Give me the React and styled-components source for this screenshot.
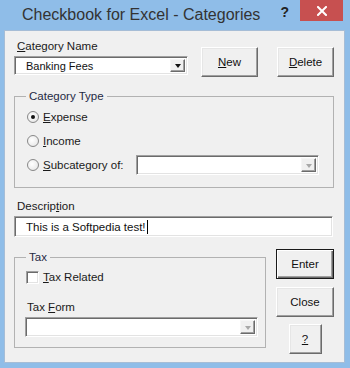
import React from 'react';
import styled, { createGlobalStyle, css } from 'styled-components';

const Global = createGlobalStyle`
  html, body { margin: 0; padding: 0; }
  body {
    width: 350px; height: 368px; overflow: hidden;
    font-family: "Liberation Sans", Arial, sans-serif;
    font-size: 11.5px; color: #1a1a1a;
  }
  * { box-sizing: border-box; }
`;

const Window = styled.div`
  width: 350px; height: 368px;
  background: #8fbde8;
  display: flex; flex-direction: column;
  padding: 0 5px 5px 4px;
`;

const TitleBar = styled.div`
  height: 30px; flex: none;
  display: flex; align-items: flex-start;
`;

const Title = styled.div`
  margin: 5px 0 0 18px;
  font-size: 16px; line-height: 20px;
  color: #333;
`;

const HelpGlyph = styled.div`
  margin: 4px 0 0 auto;
  font-size: 14px; font-weight: bold; line-height: 16px;
  color: #222;
`;

const CloseBtn = styled.div`
  width: 43px; height: 21px; margin-left: 11px; margin-right: 2px;
  background: #c75050;
  display: flex; align-items: center; justify-content: center;
`;

const Client = styled.div`
  flex: 1;
  background: #f0f0f0;
  border: 1px solid #a6bdd6;
  padding: 7px 10px 0 9px;
  display: flex; flex-direction: column;
`;

const TopRow = styled.div`
  display: flex; align-items: flex-start;
`;

const NameCol = styled.div`
  width: 174px;
  display: flex; flex-direction: column;
`;

const Label = styled.div`
  line-height: ${p => p.$lh || 16}px;
  margin-top: ${p => p.$mt || 0}px;
  margin-bottom: ${p => p.$mb || 0}px;
  padding-left: ${p => p.$indent || 0}px;
  white-space: nowrap;
`;

const U = styled.span`
  text-decoration: underline;
  text-underline-offset: 1px;
`;

const Button = styled.div`
  width: ${p => p.$w || 57}px; height: 30px;
  margin-left: ${p => p.$ml || 0}px;
  margin-top: ${p => p.$mt || 0}px;
  background: #f0f0f0;
  display: flex; align-items: center; justify-content: center;
  font-size: 11.5px; color: #111;
  ${p => p.$default ? css`
    border: 1px solid #1a1a1a;
    box-shadow: inset 1px 1px #fff, inset -1px -1px #6b6b6b, inset -2px -2px #a0a0a0;
  ` : css`
    border: 1px solid;
    border-color: #fff #6b6b6b #6b6b6b #fff;
    box-shadow: inset -1px -1px #a0a0a0, inset 1px 1px #e6e6e6;
  `}
`;

const sunken = css`
  background: #fff;
  border: 1px solid;
  border-color: #a0a0a0 #fff #fff #a0a0a0;
  box-shadow: inset 1px 1px #6b6b6b, inset -1px -1px #e3e3e3;
`;

const ComboBox = styled.div`
  ${sunken}
  width: ${p => p.$w}px; height: ${p => p.$h || 20}px;
  margin-left: ${p => p.$ml || 0}px;
  margin-top: ${p => p.$mt || 0}px;
  ${p => p.$push && css`margin-left: auto;`}
  display: flex; align-items: stretch;
  padding: 2px;
`;

const ComboText = styled.div`
  flex: 1;
  padding-left: 9px;
  display: flex; align-items: center;
  font-size: 11px;
  color: #111;
`;

const DropBtn = styled.div`
  width: 15px;
  background: #f0f0f0;
  border: 1px solid;
  border-color: #f6f6f6 #6b6b6b #6b6b6b #f6f6f6;
  box-shadow: inset -1px -1px #a0a0a0;
  display: flex; align-items: center; justify-content: center;
`;

const Arrow = styled.div`
  width: 0; height: 0;
  border-left: 3.5px solid transparent;
  border-right: 3.5px solid transparent;
  border-top: 4px solid ${p => p.$dim ? '#a8a8a8' : '#111'};
  margin-top: 1px;
`;

const Group = styled.fieldset`
  margin: ${p => p.$mt || 0}px 0 0 0;
  padding: 0;
  width: ${p => p.$w}px;
  border: 1px solid #b2b2b2;
  min-width: 0;
`;

const Legend = styled.legend`
  margin-left: 11px;
  padding: 0 3px;
  line-height: 14px;
  font-size: 11.5px;
  color: #1f2a44;
`;

const GroupBody = styled.div`
  padding: ${p => p.$pad};
  display: flex; flex-direction: column;
`;

const OptionRow = styled.div`
  height: ${p => p.$h || 24}px;
  display: flex; align-items: center;
`;

const Radio = styled.div`
  width: 12px; height: 12px; border-radius: 50%;
  border: 1px solid #888;
  background: radial-gradient(circle at 40% 40%, #fff 0%, #ececec 65%, #d2d2d2 100%);
  display: flex; align-items: center; justify-content: center;
  flex: none;
  &::after {
    content: "";
    width: 4px; height: 4px; border-radius: 50%;
    background: ${p => p.$checked ? '#111' : 'transparent'};
  }
`;

const Check = styled.div`
  ${sunken}
  width: 13px; height: 13px; flex: none;
`;

const OptLabel = styled.div`
  margin-left: 4px;
  white-space: nowrap;
`;

const TextInput = styled.div`
  ${sunken}
  width: 319px; height: 21px;
  margin-top: 3px;
  padding-left: 11px;
  display: flex; align-items: center;
  color: #111;
`;

const Caret = styled.span`
  display: inline-block;
  width: 1px; height: 14px;
  background: #000;
  margin-left: 1px;
`;

const BottomRow = styled.div`
  margin-top: 12px;
  display: flex; align-items: flex-start;
`;

const ButtonCol = styled.div`
  margin-left: 10px; width: 58px;
  display: flex; flex-direction: column; align-items: center;
`;

export default function App() {
  return (
    <>
      <Global />
      <Window>
        <TitleBar>
          <Title>Checkbook for Excel - Categories</Title>
          <HelpGlyph>?</HelpGlyph>
          <CloseBtn>
            <svg width="10" height="10" viewBox="0 0 10 10">
              <path d="M1 1 L9 9 M9 1 L1 9" stroke="#fff" strokeWidth="2" strokeLinecap="square" />
            </svg>
          </CloseBtn>
        </TitleBar>
        <Client>
          <TopRow>
            <NameCol>
              <Label $lh={16} $mb={2} $indent={3}><U>C</U>ategory Name</Label>
              <ComboBox $w={174} $h={19}>
                <ComboText>Banking Fees</ComboText>
                <DropBtn><Arrow /></DropBtn>
              </ComboBox>
            </NameCol>
            <Button $ml={13} $mt={9}><U>N</U>ew</Button>
            <Button $ml={19} $mt={9}><U>D</U>elete</Button>
          </TopRow>

          <Group $mt={12} $w={320}>
            <Legend>Category Type</Legend>
            <GroupBody $pad="2px 14px 10px 12px">
              <OptionRow>
                <Radio $checked />
                <OptLabel><U>E</U>xpense</OptLabel>
              </OptionRow>
              <OptionRow>
                <Radio />
                <OptLabel><U>I</U>ncome</OptLabel>
              </OptionRow>
              <OptionRow>
                <Radio />
                <OptLabel><U>S</U>ubcategory of:</OptLabel>
                <ComboBox $w={183} $h={20} $push>
                  <ComboText />
                  <DropBtn><Arrow $dim /></DropBtn>
                </ComboBox>
              </OptionRow>
            </GroupBody>
          </Group>

          <Label $lh={14} $mt={11} $indent={3}>Descrip<U>t</U>ion</Label>
          <TextInput>This is a Softpedia test!<Caret /></TextInput>

          <BottomRow>
            <Group $mt={1} $w={252}>
              <Legend>Tax</Legend>
              <GroupBody $pad="0 0 10px 11px">
                <OptionRow $h={26}>
                  <Check />
                  <OptLabel><U>T</U>ax Related</OptLabel>
                </OptionRow>
                <Label $lh={14} $mt={10} $indent={1}>Tax <U>F</U>orm</Label>
                <ComboBox $w={233} $h={20} $ml={-1} $mt={3}>
                  <ComboText />
                  <DropBtn><Arrow $dim /></DropBtn>
                </ComboBox>
              </GroupBody>
            </Group>
            <ButtonCol>
              <Button $w={58} $default>Enter</Button>
              <Button $w={58} $mt={8}>Close</Button>
              <Button $w={33} $mt={7}><U>?</U></Button>
            </ButtonCol>
          </BottomRow>
        </Client>
      </Window>
    </>
  );
}
